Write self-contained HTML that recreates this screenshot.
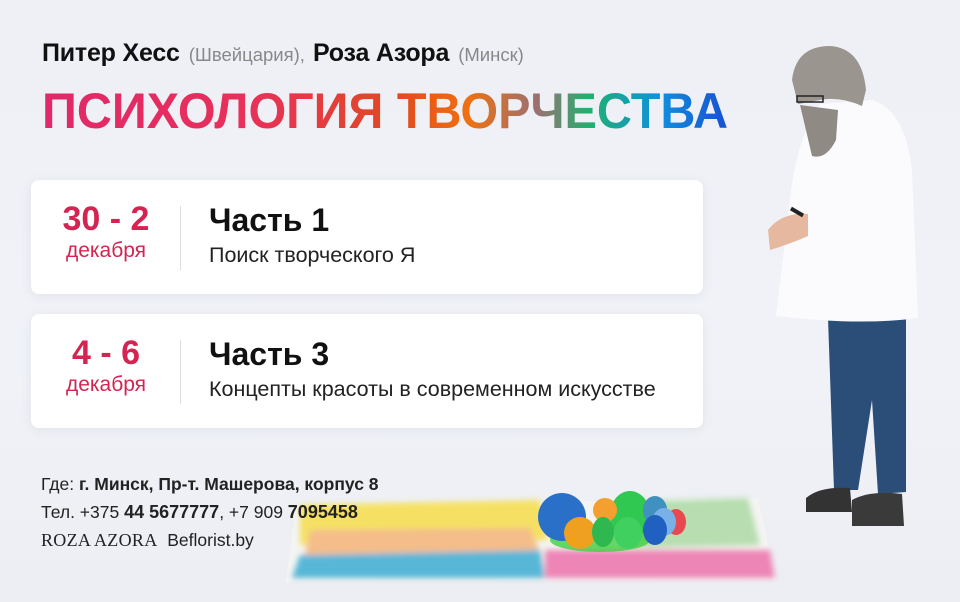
<!DOCTYPE html>
<html><head><meta charset="utf-8"><style>
*{margin:0;padding:0;box-sizing:border-box}
body{width:960px;height:602px;overflow:hidden;background:linear-gradient(180deg,#eef0f6 0%,#f0f2f7 60%,#eceef3 100%);font-family:"Liberation Sans",sans-serif;position:relative}
.abs{position:absolute}
.names{left:42px;top:39px;font-size:25px;font-weight:bold;color:#111;white-space:nowrap;letter-spacing:-.2px}
.names span{font-weight:normal;font-size:18.5px;color:#888;letter-spacing:0;margin:0 8px 0 9px}
.card{left:31px;width:672px;height:114px;background:#fff;border-radius:8px;box-shadow:0 2px 10px rgba(120,130,160,.12)}
.date{position:absolute;left:0;width:150px;text-align:center;color:#d42452}
.date b{display:block;font-size:34px;margin-top:21px;line-height:36px}
.date i{display:block;font-style:normal;font-size:21px;margin-top:2px}
.div{position:absolute;left:149px;top:26px;width:1px;height:64px;background:#ddd}
.ttl{position:absolute;left:178px;top:22px;font-size:32px;font-weight:bold;color:#111;line-height:36px}
.sub{position:absolute;left:178px;top:63px;font-size:21.5px;color:#222}
.info{left:41px;font-size:17.5px;color:#222;white-space:nowrap;z-index:2}
</style></head><body>
<svg class="abs" style="left:0;top:0" width="960" height="602">
<defs><filter id="b"><feGaussianBlur stdDeviation="3"/></filter></defs>
<polygon points="296,506 758,498 776,580 286,582" fill="#f4f4f2"/>
<g filter="url(#b)" opacity=".8">
<polygon points="300,505 540,500 548,540 300,545" fill="#f6dc40"/>
<polygon points="310,530 530,528 540,552 305,555" fill="#f4b070"/>
<polygon points="300,555 540,550 545,578 292,578" fill="#30a8d0"/>
<polygon points="545,550 770,550 775,578 545,578" fill="#ec6aa8"/>
<polygon points="620,502 748,498 760,545 630,548" fill="#a8d8a0"/>
</g>
<ellipse cx="600" cy="540" rx="50" ry="12" fill="#40d040" opacity=".8"/>
<ellipse cx="562" cy="517" rx="24" ry="24" fill="#2a70c8"/>
<ellipse cx="630" cy="515" rx="20" ry="24" fill="#30c850"/>
<ellipse cx="655" cy="510" rx="12" ry="14" fill="#4090c0"/>
<ellipse cx="676" cy="522" rx="10" ry="13" fill="#e84850"/>
<ellipse cx="664" cy="522" rx="12" ry="14" fill="#7ab0e8"/>
<ellipse cx="605" cy="510" rx="12" ry="12" fill="#f4a030"/>
<ellipse cx="580" cy="533" rx="16" ry="16" fill="#f0a020"/>
<ellipse cx="603" cy="532" rx="11" ry="15" fill="#30b850"/>
<ellipse cx="628" cy="533" rx="14" ry="16" fill="#40d060"/>
<ellipse cx="655" cy="530" rx="12" ry="15" fill="#2060c0"/>
<path d="M828,318 L906,318 L906,492 L878,494 L872,400 L858,490 L834,490 Z" fill="#2a4e78"/>
<path d="M806,498 Q820,486 850,488 L852,512 L806,512 Z" fill="#333"/>
<path d="M852,500 Q870,490 902,494 L904,526 L852,526 Z" fill="#3a3a3a"/>
<path d="M820,104 L872,100 Q905,110 912,170 L918,318 Q860,326 776,316 L790,200 Q796,140 820,104 Z" fill="#fbfbfd"/>
<path d="M768,230 Q782,212 808,214 L808,236 Q790,244 770,250 Z" fill="#e6b8a0"/>
<rect x="790" y="210" width="14" height="4" fill="#222" transform="rotate(30 797 212)"/>
<path d="M800,105 Q806,130 812,156 Q826,160 836,140 L838,110 Z" fill="#8f8a84"/>
<path d="M792,80 Q796,46 830,46 Q862,48 866,90 L862,106 Q840,96 820,100 L798,104 Z" fill="#9a968f"/>
<rect x="797" y="96" width="26" height="6" fill="none" stroke="#222" stroke-width="1.5"/>
</svg>
<div class="abs names">Питер Хесс<span>(Швейцария),</span>Роза Азора<span>(Минск)</span></div>
<svg class="abs" style="left:40px;top:84px" width="700" height="50">
<defs><linearGradient id="g" x1="0" x2="1"><stop offset="0" stop-color="#e0286a"/><stop offset=".3" stop-color="#e8305a"/><stop offset=".52" stop-color="#e04a20"/><stop offset=".62" stop-color="#f07010"/><stop offset=".72" stop-color="#9c7070"/><stop offset=".8" stop-color="#20b070"/><stop offset=".9" stop-color="#1090e0"/><stop offset="1" stop-color="#1850d0"/></linearGradient></defs>
<text x="2" y="44" textLength="686" lengthAdjust="spacingAndGlyphs" font-family="Liberation Sans" font-weight="bold" font-size="50" fill="url(#g)">ПСИХОЛОГИЯ ТВОРЧЕСТВА</text></svg>
<div class="abs card" style="top:180px"><div class="date"><b>30 - 2</b><i>декабря</i></div><div class="div"></div><div class="ttl">Часть 1</div><div class="sub">Поиск творческого Я</div></div>
<div class="abs card" style="top:314px"><div class="date"><b>4 - 6</b><i>декабря</i></div><div class="div"></div><div class="ttl">Часть 3</div><div class="sub">Концепты красоты в современном искусстве</div></div>
<div class="abs info" style="top:474px">Где: <b>г. Минск, Пр-т. Машерова, корпус 8</b></div>
<div class="abs info" style="top:502px">Тел. +375 <b style="font-size:18px">44 5677777</b>, +7 909 <b style="font-size:18px">7095458</b></div>
<div class="abs info" style="top:530px"><span style="font-family:'Liberation Serif';font-size:18px;letter-spacing:.3px">ROZA AZORA</span>&nbsp; Beflorist.by</div>
</body></html>
